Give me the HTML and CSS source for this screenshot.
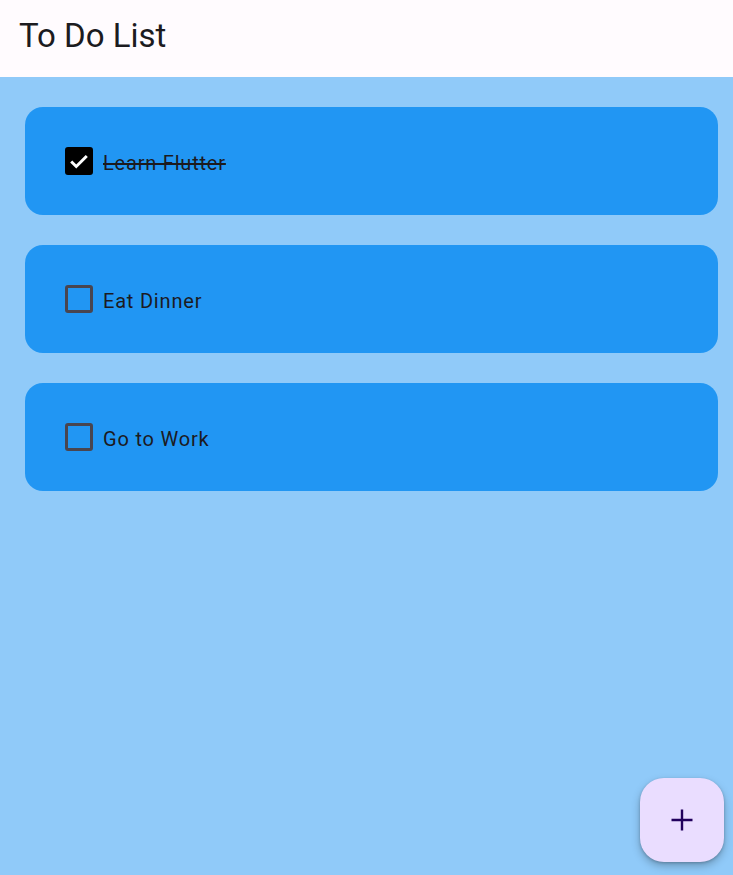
FILE: index.html
```html
<!DOCTYPE html>
<html lang="en">
<head>
  <meta charset="UTF-8">
  <meta name="viewport" content="width=device-width, initial-scale=1.0">
  <title>To Do List</title>
  <link rel="stylesheet" href="styles.css">
</head>
<body>
  <header class="appBar">
    <h1>To Do List</h1>
  </header>

  <main class="todoList">
    <div class="todoTile">
      <span class="checkBox checked">
        <svg viewBox="0 0 24 24" width="26" height="26"><path d="M3.5 12.5l5.5 5.5 11.5-11.5" fill="none" stroke="#fff" stroke-width="3.2"/></svg>
      </span>
      <span class="taskName done">Learn Flutter</span>
    </div>
    <div class="todoTile">
      <span class="checkBox"></span>
      <span class="taskName">Eat Dinner</span>
    </div>
    <div class="todoTile">
      <span class="checkBox"></span>
      <span class="taskName">Go to Work</span>
    </div>
  </main>

  <button class="addButton" aria-label="Add task">
    <svg viewBox="0 0 24 24" width="36" height="36"><path d="M12 5v14M5 12h14" fill="none" stroke="#21005D" stroke-width="1.6"/></svg>
  </button>
</body>
</html>
```

FILE: styles.css
```css
html, body{
  margin: 0;
  height: 100%;
}
body{
  background-color: #90CAF9;
  font-family: Roboto, "Noto Sans", sans-serif;
  color: #1C1B1F;
  overflow: hidden;
}
.appBar{
  background-color: #FFFBFE;
  height: 77px;
  display: flex;
  align-items: center;
  padding-left: 19px;
}
.appBar h1{
  margin: 0;
  font-size: 33px;
  font-weight: 400;
  margin-top: -6px;
}
.todoList{
  display: flex;
  flex-direction: column;
  gap: 30px;
  padding: 30px 15px 0 25px;
}
.todoTile{
  background-color: #2196F3;
  border-radius: 18px;
  height: 108px;
  display: flex;
  align-items: center;
  padding-left: 40px;
  gap: 10px;
}
.checkBox{
  box-sizing: border-box;
  width: 28px;
  height: 28px;
  border: 3px solid #49454F;
  border-radius: 3px;
  display: flex;
  align-items: center;
  justify-content: center;
}
.checkBox.checked{
  background-color: #000;
  border-color: #000;
}
.taskName{
  font-size: 20px;
  letter-spacing: 0.8px;
  margin-top: 3px;
}
.taskName.done{
  text-decoration: line-through;
}
.addButton{
  position: absolute;
  left: 640px;
  top: 778px;
  width: 84px;
  height: 84px;
  border: none;
  border-radius: 24px;
  background-color: #EADDFF;
  box-shadow: 0 4px 8px rgba(0,0,0,0.25), 0 1px 3px rgba(0,0,0,0.2);
  display: flex;
  align-items: center;
  justify-content: center;
  padding: 0;
}
```
